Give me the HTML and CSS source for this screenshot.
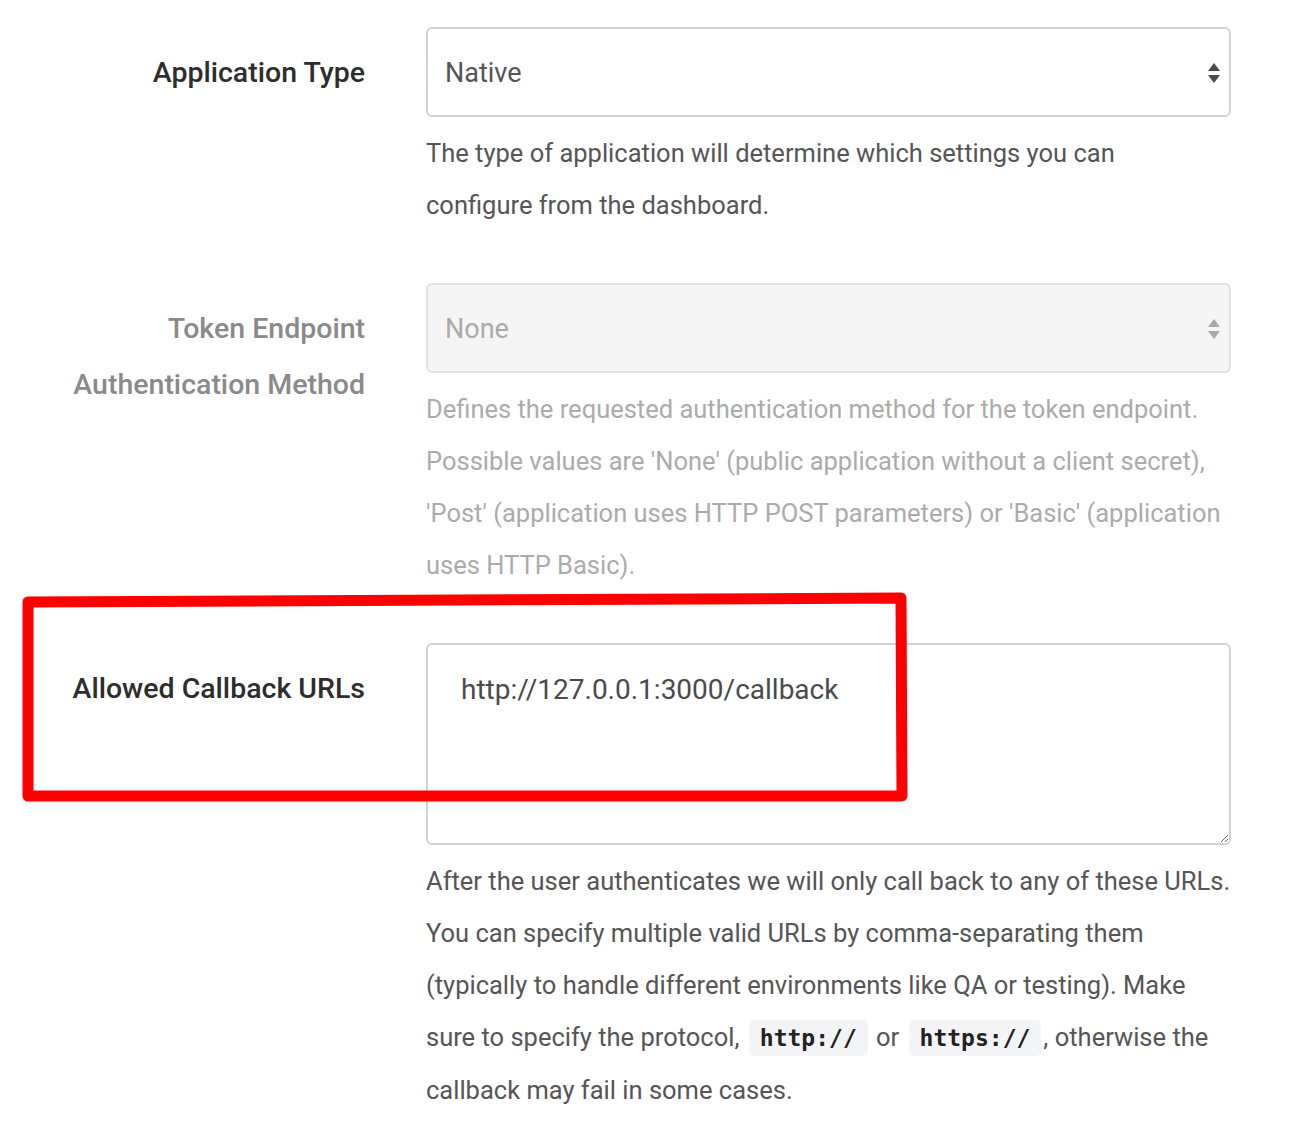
FILE: index.html
```html
<!DOCTYPE html>
<html lang="en">
<head>
<meta charset="utf-8">
<title>Application settings</title>
<link rel="stylesheet" href="styles.css">
</head>
<body>
<form class="form">
  <div class="row">
    <label class="label">Application Type</label>
    <div class="field">
      <div class="select">
        <span>Native</span>
        <svg class="arrows" width="14" height="24" viewBox="0 0 14 24"><path d="M7 2 L13 10 L1 10 Z"/><path d="M1 14 L13 14 L7 22 Z"/></svg>
      </div>
      <p class="help help-short">The type of application will determine which settings you can configure from the dashboard.</p>
    </div>
  </div>
  <div class="row disabled">
    <label class="label">Token Endpoint Authentication Method</label>
    <div class="field">
      <div class="select">
        <span>None</span>
        <svg class="arrows" width="14" height="24" viewBox="0 0 14 24"><path d="M7 2 L13 10 L1 10 Z"/><path d="M1 14 L13 14 L7 22 Z"/></svg>
      </div>
      <p class="help">Defines the requested authentication method for the token endpoint. Possible values are 'None' (public application without a client secret), 'Post' (application uses HTTP POST parameters) or 'Basic' (application uses HTTP Basic).</p>
    </div>
  </div>
  <div class="row">
    <label class="label">Allowed Callback URLs</label>
    <div class="field">
      <textarea class="textarea">http://127.0.0.1:3000/callback</textarea>
      <p class="help">After the user authenticates we will only call back to any of these URLs. You can specify multiple valid URLs by comma-separating them (typically to handle different environments like QA or testing). Make sure to specify the protocol, <code class="code">http://</code> or <code class="code">https://</code>, otherwise the callback may fail in some cases.</p>
    </div>
  </div>
</form>
<svg class="annotation" width="900" height="220" viewBox="0 0 900 220">
  <path d="M8 9 L881 5 L882 203 L8 203 Z" fill="none" stroke="#ff0000" stroke-width="11" stroke-linejoin="round"/>
</svg>
</body>
</html>
```

FILE: styles.css
```css
html, body {
  margin: 0;
  background: #ffffff;
}

body {
  position: relative;
  font-family: Roboto, "Liberation Sans", sans-serif;
}

.form {
  display: flex;
  flex-direction: column;
  gap: 52px;
  padding-top: 27px;
}

.row {
  display: grid;
  grid-template-columns: 365px 805px;
  column-gap: 61px;
}

.label {
  text-align: right;
  padding-left: 40px;
  font-family: Roboto, "Liberation Sans", sans-serif;
  font-weight: 500;
  font-size: 28.5px;
  line-height: 56px;
  padding-top: 18px;
  color: #2d2d2d;
}

.field {
  display: flex;
  flex-direction: column;
}

.select {
  box-sizing: border-box;
  height: 90px;
  border: 2px solid #d3d3d3;
  border-radius: 6px;
  padding: 2px 8px 0 17px;
  display: flex;
  align-items: center;
  justify-content: space-between;
  font-size: 27px;
  color: #555555;
  background: #ffffff;
}

.arrows {
  fill: #4a4a4a;
}

.help {
  margin: 10px -8px 0 0;
  font-size: 25.5px;
  line-height: 52px;
  color: #555555;
}

.help-short {
  max-width: 760px;
}

.disabled .label {
  color: #8a8a8a;
}

.disabled .select {
  background: #f5f5f5;
  border-color: #e2e2e2;
  color: #aaaaaa;
}

.disabled .arrows {
  fill: #a8a8a8;
}

.disabled .help {
  color: #ababab;
}

.textarea {
  box-sizing: border-box;
  display: block;
  width: 805px;
  height: 202px;
  margin: 0;
  border: 2px solid #d3d3d3;
  border-radius: 6px;
  padding: 29px 33px;
  font-family: Roboto, "Liberation Sans", sans-serif;
  font-size: 28px;
  line-height: 32px;
  color: #4a4a4a;
  background: #ffffff;
  outline: none;
}

.code {
  font-family: "DejaVu Sans Mono", "Liberation Mono", monospace;
  font-weight: bold;
  font-size: 23px;
  padding: 5px 11px;
  margin: 0 2px 0 3px;
  border-radius: 5px;
  background: #f3f4f6;
  color: #222222;
}

.annotation {
  position: absolute;
  left: 20px;
  top: 593px;
  overflow: visible;
}
```
